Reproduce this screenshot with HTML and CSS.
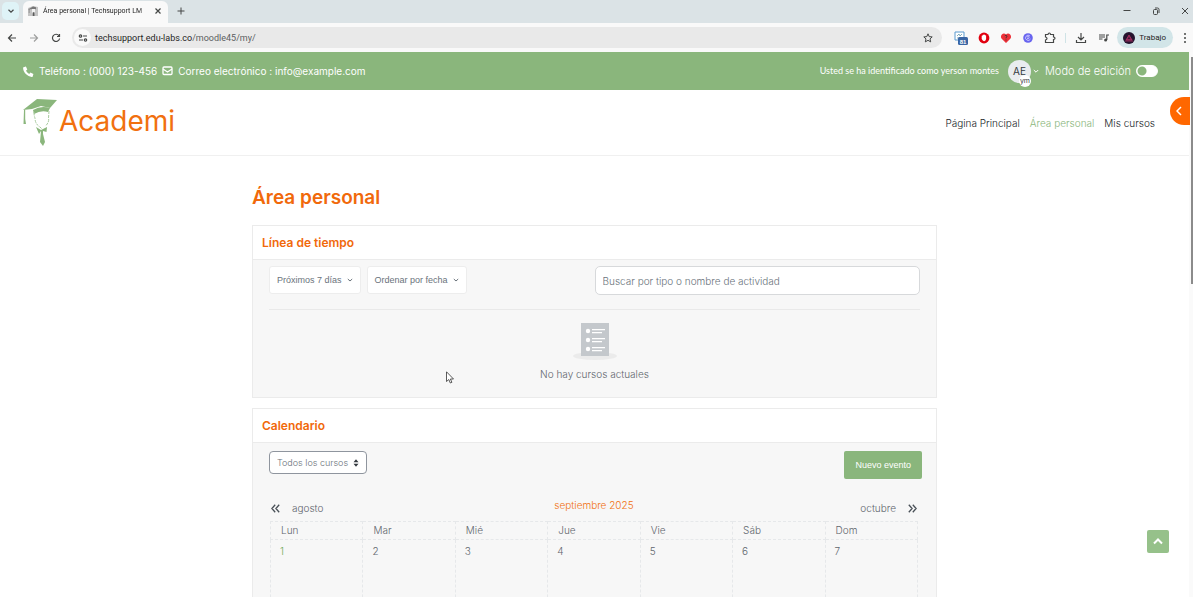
FILE: index.html
```html
<!DOCTYPE html>
<html lang="es">
<head>
<meta charset="utf-8">
<title>Área personal | Techsupport LMS</title>
<link rel="stylesheet" href="styles.css">
</head>
<body>
<div class="tabstrip">
  <button class="tab-search" aria-label="Buscar pestañas"><svg width="8" height="8" viewBox="0 0 8 8"><path d="M1.500 2.800 4 5.200 6.500 2.800" class="ink"/></svg></button>
  <div class="tab">
    <svg width="10" height="10" viewBox="0 0 10 10"><path d="M0 2 5 0l5 1v9H0z" fill="#c4c4c4"/><path d="M0 3.500 5 .5l3 .8v2L5 3z" fill="#777"/><path d="M4 3h3v3L5.500 9 4 6z" fill="#f2f2f2"/><path d="M5 6.500h1.200V10H5zM1.200 3v4" fill="#555" stroke="#666" stroke-width=".5"/></svg>
    <span class="tab-title">Área personal | Techsupport LM</span>
    <button class="plain" aria-label="Cerrar pestaña"><svg width="8" height="8" viewBox="0 0 8 8"><path d="m1.500 1.500 5 5m0-5-5 5" class="ink"/></svg></button>
  </div>
  <button class="plain new-tab" aria-label="Nueva pestaña"><svg width="8" height="8" viewBox="0 0 8 8"><path d="M4 .5v7M.5 4h7" class="ink thin"/></svg></button>
  <div class="window-buttons">
    <button class="plain" aria-label="Minimizar"><svg width="8" height="8" viewBox="0 0 8 8"><path d="M.5 3.500h7" class="ink thin"/></svg></button>
    <button class="plain" aria-label="Restaurar"><svg width="8" height="8" viewBox="0 0 8 8"><rect x="1.500" y="2.500" width="4" height="5" rx="1" class="ink thin"/><path d="M3 1h2.500q1.500 0 1.500 1.500V6" class="ink thin"/></svg></button>
    <button class="plain" aria-label="Cerrar"><svg width="8" height="8" viewBox="0 0 8 8"><path d="m1 1 6 6m0-6L1 7" class="ink thin"/></svg></button>
  </div>
</div>
<div class="toolbar">
  <div class="history">
    <button class="plain" aria-label="Atrás"><svg width="10" height="10" viewBox="0 0 10 10"><path d="M9 5H1.500M5 1.500 1.500 5 5 8.500" class="ink"/></svg></button>
    <button class="plain faded" aria-label="Adelante"><svg width="10" height="10" viewBox="0 0 10 10"><path d="M1 5h7.500M5 1.500 8.500 5 5 8.500" class="ink"/></svg></button>
    <button class="plain" aria-label="Recargar"><svg width="10" height="10" viewBox="0 0 10 10"><path d="M8 2.800A3.600 3.600 0 1 0 8.600 5.500M8.500 1v2.500H6" class="ink"/></svg></button>
  </div>
  <div class="address">
    <span class="site-info"><svg width="10" height="10" viewBox="0 0 10 10"><circle cx="2.500" cy="3" r="1.200" class="ink"/><path d="M5 3h4M1 7h4" class="ink"/><circle cx="7.500" cy="7" r="1.200" class="ink"/></svg></span>
    <span class="url">techsupport.edu-labs.co<span class="path">/moodle45/my/</span></span>
    <button class="plain star" aria-label="Marcador"><svg width="10" height="10" viewBox="0 0 10 10"><path d="m5 .8 1.200 2.800 3 .3L7 5.900l.7 3L5 7.300 2.300 8.900l.7-3L.8 3.900l3-.3z" class="ink thin"/></svg></button>
  </div>
  <div class="extensions">
    <svg width="14" height="14" viewBox="0 0 14 14"><path d="M1 1h9v8H1z" fill="#fff" stroke="#5b9bd0"/><path d="M3 5l2-2 1 2 2-2M3 7h3" fill="none" stroke="#69a" stroke-width=".8"/><rect x="4" y="6" width="10" height="8" rx="1.500" fill="#3965a4"/><text x="9" y="12.500" text-anchor="middle" class="badge">81</text></svg>
    <svg width="12" height="12" viewBox="0 0 12 12"><circle cx="6" cy="6" r="5.400" fill="#e1000f"/><path d="M3.700 3.800q.5-.6 1 0V3q.6-.8 1.200 0 .6-.8 1.200 0v.6q.6-.5 1 0V7q-.3 2-2 2.200Q4.800 9 3.700 7z" fill="#fff"/></svg>
    <svg width="12" height="12" viewBox="0 0 12 12"><path d="M6 11 1.500 6.500C-.5 3.500 3.500-.5 6 2.500c2.500-3 6.500 1 4.500 4z" fill="#ed3038"/><path d="M4.800 3.800q1.200-1 2 0t-.8 1.700v.8M6 7.500v1" fill="none" stroke="#493033"/></svg>
    <svg width="12" height="12" viewBox="0 0 12 12"><circle cx="6" cy="6" r="4.800" fill="#6864ef"/><path d="M8 4a2.600 2.600 0 1 0 .5 3M5 6.500q2 1 2-1T5 5" fill="none" stroke="#d9d8ff" stroke-width=".8"/></svg>
    <svg width="12" height="12" viewBox="0 0 12 12"><path d="M1.500 2.500H4q.2-1.500 1.300-1.500t1.200 1.500h3V5q1.500.2 1.500 1.300T9.500 7.500v3h-8V8q1.500-.3 1.500-1.500T1.500 5z" class="ink"/></svg>
  </div>
  <span class="separator"></span>
  <div class="tools">
    <button class="plain" aria-label="Descargas"><svg width="12" height="12" viewBox="0 0 12 12"><path d="M6 1v6.500M3 5l3 3 3-3M1.500 8v2.500h9V8" class="ink"/></svg></button>
    <button class="plain" aria-label="Multimedia"><svg width="12" height="12" viewBox="0 0 12 12"><path d="M1 3h6M1 5h6M1 7h3.500M8.800 8V3H11" class="ink"/><circle cx="7.600" cy="8" r="1.500" fill="#454746"/></svg></button>
  </div>
  <button class="profile"><svg width="12" height="12" viewBox="0 0 12 12"><circle cx="6" cy="6" r="6" fill="#25142e"/><path d="m3 8 3-5 3 5zM2 9h8" fill="#7c264f" stroke="#be356a" stroke-width=".7"/><path d="m5 7 1-2 1 2" fill="#2d1730"/></svg>Trabajo</button>
  <button class="plain" aria-label="Menú"><svg width="4" height="12" viewBox="0 0 4 12"><g fill="#454746"><circle cx="2" cy="2" r="1"/><circle cx="2" cy="6" r="1"/><circle cx="2" cy="10" r="1"/></g></svg></button>
</div>

<div class="viewport">
  <div class="page">
    <div class="topbar">
      <div class="contact">
        <svg width="11" height="11" viewBox="0 0 11 11"><path d="M.5 1.200 2.900.5l1.400 3-1.300 1.200q1 2 3.200 3.200l1.200-1.300 3 1.400-.7 2.400q-.2.500-1 .5C4.500 10.500.2 6.500.1 2q0-.6.4-.8z" fill="#fff"/></svg>
        <span>Teléfono : (000) 123-456</span>
        <svg width="11" height="10" viewBox="0 0 11 10"><rect x="1" y="1" width="9" height="7.500" rx="1" fill="none" stroke="#fff" stroke-width="1.300"/><path d="m1 3 4.500 3L10 3" fill="none" stroke="#fff" stroke-width="1.200"/></svg>
        <a href="#">Correo electrónico : info@example.com</a>
      </div>
      <div class="session">
        <span class="login-as">Usted se ha identificado como yerson montes</span>
        <button class="user" aria-label="Menú de usuario"><span class="initials">AE<span class="real-user">ym</span></span><svg width="6" height="6" viewBox="0 0 6 6"><path d="M.8 2 3 4.200 5.200 2" fill="none" stroke="#fff"/></svg></button>
        <label class="edit-mode">Modo de edición <input type="checkbox" class="switch"></label>
      </div>
    </div>
    <header class="site-header">
      <a class="brand" href="#">
        <svg width="36" height="50" viewBox="0 0 36 50"><g fill="#8ab67c"><path d="M0 12 14 1l20 1-7 8-9-2-9 3z"/><path d="M10 12q8-5 17-2l-2 4q-7-2-14 2z"/><path d="M1 12h1.200v9l.8 5H.5z"/><path d="M13 29l5 3 6-3-.5 5-3.500-1v3l2 8-2 4-3-4 1-11-2 3z"/></g><path d="M11 14q0 4 1 6 0 6 5 9l2 2m7-18-.5 7q1 4-3 8" fill="none" stroke="#a9cba0" stroke-dasharray="3 1"/></svg>
        <span class="brand-name">Academi</span>
      </a>
      <nav class="menu"><a href="#">Página Principal</a><a href="#" class="current">Área personal</a><a href="#">Mis cursos</a></nav>
    </header>
    <main class="content">
      <h1>Área personal</h1>
      <section class="card">
        <h2>Línea de tiempo</h2>
        <div class="card-body timeline">
          <div class="filters">
            <button class="filter">Próximos 7 días <svg width="6" height="6" viewBox="0 0 6 6"><path d="M.8 2 3 4 5.200 2" fill="none" stroke="#6a737b"/></svg></button>
            <button class="filter">Ordenar por fecha <svg width="6" height="6" viewBox="0 0 6 6"><path d="M.8 2 3 4 5.200 2" fill="none" stroke="#6a737b"/></svg></button>
            <input class="search" type="text" aria-label="Buscar actividad" placeholder="Buscar por tipo o nombre de actividad">
          </div>
          <div class="empty">
            <svg width="44" height="38" viewBox="0 0 44 38"><ellipse cx="22" cy="33" rx="22" ry="4" fill="#ebebeb"/><path d="M8 0h28v33H8z" fill="#c4c8cc"/><g fill="#fff"><circle cx="15" cy="8" r="2.200"/><circle cx="15" cy="17" r="2.200"/><circle cx="15" cy="26" r="2.200"/><path d="M19 6h13v1.200H19zM19 9h10v1.200H19zM19 15h13v1.200H19zM19 18h10v1.200H19zM19 24h13v1.200H19zM19 27h10v1.200H19z"/></g></svg>
            <p>No hay cursos actuales</p>
          </div>
        </div>
      </section>
      <section class="card">
        <h2>Calendario</h2>
        <div class="card-body calendar">
          <div class="calendar-actions">
            <span class="select-box"><select class="course" aria-label="Curso"><option>Todos los cursos</option></select><svg width="6" height="8" viewBox="0 0 6 8"><path d="m.5 3.300 2.500-3 2.500 3zM.5 4.700h5l-2.500 3z" fill="#343a40"/></svg></span>
            <button class="new-event">Nuevo evento</button>
          </div>
          <div class="months">
            <a href="#"><svg width="9" height="9" viewBox="0 0 9 9"><path d="M4.200.8.9 4.500l3.300 3.700M8.200.8 4.900 4.500l3.300 3.700" class="chevron"/></svg>agosto</a>
            <h3>septiembre 2025</h3>
            <a href="#" class="next">octubre<svg width="9" height="9" viewBox="0 0 9 9"><path d="m.8.8 3.300 3.700L.8 8.200M4.800.8l3.300 3.700-3.300 3.700" class="chevron"/></svg></a>
          </div>
          <table class="grid">
            <thead><tr><th>Lun</th><th>Mar</th><th>Mié</th><th>Jue</th><th>Vie</th><th>Sáb</th><th>Dom</th></tr></thead>
            <tbody><tr><td class="today">1</td><td>2</td><td>3</td><td>4</td><td>5</td><td>6</td><td>7</td></tr></tbody>
          </table>
        </div>
      </section>
    </main>
  </div>
  <div class="scrollbar"><span class="thumb"></span></div>
  <button class="drawer" aria-label="Abrir cajón de bloques"><svg width="6" height="10" viewBox="0 0 6 10"><path d="M5 1 1 5l4 4" fill="none" stroke="#fff" stroke-width="1.500"/></svg></button>
  <button class="to-top" aria-label="Subir"><svg width="10" height="7" viewBox="0 0 10 7"><path d="m1 5.500 4-4 4 4" fill="none" stroke="#fff" stroke-width="2"/></svg></button>
  <svg class="cursor" width="8" height="13" viewBox="0 0 8 13"><path d="M.5.800v9.700l2.300-2 1.500 3.500 1.600-.7-1.500-3.300h3.100z" fill="#fff" stroke="#333" stroke-width=".8"/></svg>
</div>
</body>
</html>
```
FILE: styles.css
```css
* { box-sizing: border-box; }
body {
  margin: 0;
  height: 100vh;
  display: flex;
  flex-direction: column;
  overflow: hidden;
  background: #fff;
  color: #5f666d;
  font: 300 10px/16px "Century Gothic", Inter, sans-serif;
}
button { font-family: inherit; border: 0; padding: 0; cursor: pointer; }
a { color: inherit; text-decoration: none; }
svg { display: block; flex: none; }
h1, h2, h3, p { margin: 0; }
.plain { background: none; display: flex; }
.ink { fill: none; stroke: #454746; stroke-width: 1.2; }
.thin { stroke-width: 1; }
.faded { opacity: .5; }

/* Browser frame */
.tabstrip {
  display: flex;
  align-items: center;
  height: 23px;
  flex: none;
  padding: 0 4px 2px 2px;
  background: #dbe3e6;
}
.tab-search {
  display: grid;
  place-items: center;
  width: 17px;
  height: 18px;
  margin-right: 4px;
  border-radius: 5px;
  background: #dff3f7;
}
.tab {
  display: flex;
  align-items: center;
  gap: 5px;
  width: 145px;
  height: 22px;
  margin: 2px 0 -1px;
  padding: 0 6px 2px 5px;
  border-radius: 6px 6px 0 0;
  background: #f9f9f9;
}
.tab-title {
  flex: 1;
  white-space: nowrap;
  color: #1f1f1f;
  font: 400 7px/12px Roboto, sans-serif;
  mask-image: linear-gradient(90deg, #000 90%, transparent 105%);
}
.new-tab { margin-left: 9px; }
.window-buttons { display: flex; gap: 21px; margin-left: auto; }
.toolbar {
  display: flex;
  align-items: center;
  height: 29px;
  flex: none;
  padding: 0 6px 0 7px;
  background: #f9f9f9;
}
.history { display: flex; gap: 12px; margin-right: 11px; }
.address {
  display: flex;
  align-items: center;
  flex: 1;
  height: 21px;
  padding: 0 9px 0 2px;
  border-radius: 11px;
  background: #e9e9e9;
}
.site-info {
  display: grid;
  place-items: center;
  width: 17px;
  height: 17px;
  margin-right: 4px;
  border-radius: 50%;
  background: #fafafa;
}
.url { color: #1f1f1f; font: 400 9px/14px Roboto, sans-serif; }
.path { color: #5c5f62; }
.star { margin-left: auto; }
.extensions { display: flex; align-items: center; gap: 10px; margin-left: 12px; }
.badge { fill: #fff; font: 700 6px "Liberation Sans", sans-serif; }
.separator { width: 1px; height: 10px; margin: 0 9px; background: #cfe3e6; }
.tools { display: flex; gap: 11px; }
.profile {
  display: flex;
  align-items: center;
  gap: 4px;
  height: 21px;
  margin: 0 10px 0 7px;
  padding: 0 7px 0 6px;
  border-radius: 11px;
  background: #d2e5e8;
  color: #1f1f1f;
  font: 400 8px/12px Roboto, sans-serif;
}

/* Site */
.viewport { position: relative; display: flex; flex: 1; min-height: 0; }
.page { flex: 1; min-width: 0; overflow: hidden; }
.scrollbar { width: 4px; padding: 5px 0 0 2px; background: #fafafa; }
.thumb { display: block; height: 42%; background: #8b8b8b; }
.topbar {
  display: flex;
  align-items: center;
  justify-content: space-between;
  height: 38px;
  padding: 0 31px 0 23px;
  background: #8ab67c;
  color: #fff;
}
.contact { display: flex; align-items: center; gap: 5px; font-weight: 400; }
.session { display: flex; align-items: center; }
.login-as { margin-right: 9px; font: 400 9px/16px Lato, sans-serif; }
.user { display: flex; align-items: center; gap: 2px; margin-right: 6px; background: none; }
.initials {
  position: relative;
  display: grid;
  place-items: center;
  width: 23px;
  height: 23px;
  border-radius: 50%;
  background: #e9ecef;
  color: #343a40;
  font: 400 10px/12px Inter, sans-serif;
}
.real-user {
  position: absolute;
  right: 0;
  bottom: -4px;
  width: 12px;
  border-radius: 50%;
  background: #fff;
  font-size: 7px;
}
.edit-mode { display: flex; align-items: center; gap: 5px; font-size: 11px; }
.switch {
  appearance: none;
  width: 22px;
  height: 12px;
  margin: 0;
  border: 1px solid #fff;
  border-radius: 6px;
  background: radial-gradient(circle at 5px 5px, #8ab67c 4px, #fff 5px);
}
.site-header {
  display: flex;
  align-items: center;
  justify-content: space-between;
  height: 66px;
  padding: 0 34px 0 23px;
  border-bottom: 1px solid #f0f0f0;
}
.brand { display: flex; align-items: center; color: #f1700f; font-size: 28px; font-weight: 400; line-height: 32px; }
.brand-name { padding-bottom: 4px; }
.menu { display: flex; gap: 10px; color: #212529; }
.menu .current { color: #8ab67c; }
.content { width: 58%; max-width: 685px; margin: 0 auto; padding-top: 28px; }
h1 { margin-bottom: 13px; color: #f1690b; font-size: 19px; font-weight: 600; line-height: 28px; }
.card { margin-bottom: 10px; border: 1px solid #ebebeb; background: #f7f7f7; }
h2 {
  padding: 8px 9px;
  border-bottom: 1px solid #ebebeb;
  background: #fff;
  color: #f1690b;
  font-size: 12px;
  font-weight: 600;
  line-height: 17px;
}
.timeline { padding: 6px 16px 15px; }
.filters { display: flex; gap: 6px; padding-bottom: 14px; border-bottom: 1px solid #e9e9e9; }
.filter {
  display: flex;
  align-items: center;
  gap: 5px;
  height: 28px;
  padding: 0 7px;
  border: 1px solid #ededed;
  border-radius: 3px;
  background: #fff;
  color: #6a737b;
  font: 400 9px/16px "Liberation Sans", Arial, sans-serif;
}
.search {
  width: 50%;
  height: 29px;
  margin-left: auto;
  padding: 0 7px;
  border: 1px solid #d7d9db;
  border-radius: 5px;
  background: #fff;
  font: inherit;
}
.search::placeholder { color: #6a737b; }
.empty { display: flex; flex-direction: column; align-items: center; gap: 5px; padding-top: 13px; }
.calendar { padding: 8px 14px 0 16px; }
.calendar-actions { display: flex; justify-content: space-between; align-items: flex-start; }
.select-box { display: grid; align-items: center; }
.select-box > * { grid-area: 1 / 1; }
.select-box svg { justify-self: end; margin-right: 8px; pointer-events: none; }
.course {
  appearance: none;
  height: 23px;
  padding: 0 17px 0 7px;
  border: 1px solid #8f959e;
  border-radius: 4px;
  background: #fff;
  color: #6a737b;
  font: inherit;
  font-size: 9px;
}
.new-event {
  height: 28px;
  padding: 0 11px;
  border-radius: 2px;
  background: #8ab67c;
  color: #fff;
  font: 400 9px/16px "Liberation Sans", Arial, sans-serif;
}
.months {
  display: grid;
  grid-template-columns: 1fr auto 1fr;
  padding: 18px 5px 5px 2px;
}
.months a { display: flex; align-items: center; gap: 12px; padding-top: 3px; }
.months .next { justify-content: flex-end; }
.chevron { fill: none; stroke: #495057; stroke-width: 1.3; }
h3 { color: #f1700f; font-size: 10px; font-weight: 300; line-height: 16px; }
.grid {
  width: calc(100% - 5px);
  margin-left: 1px;
  border-collapse: collapse;
  table-layout: fixed;
}
.grid th, .grid td { border: 1px dashed #e6e8ea; text-align: left; font-weight: 300; }
.grid th { height: 18px; padding: 0 10px 1px; }
.grid td { height: 92px; padding: 3px 9px; vertical-align: top; }
.grid .today { color: #6fab5c; }

/* Floating controls */
.drawer {
  position: absolute;
  top: 45px;
  right: 3px;
  width: 20px;
  height: 28px;
  padding-left: 6px;
  border-radius: 14px 0 0 14px;
  background: #ff6700;
}
.to-top {
  position: absolute;
  right: 24px;
  bottom: 44px;
  display: grid;
  place-items: center;
  width: 22px;
  height: 23px;
  border-radius: 2px;
  background: #96c18a;
}
.cursor { position: absolute; left: 446px; top: 319px; }
```
